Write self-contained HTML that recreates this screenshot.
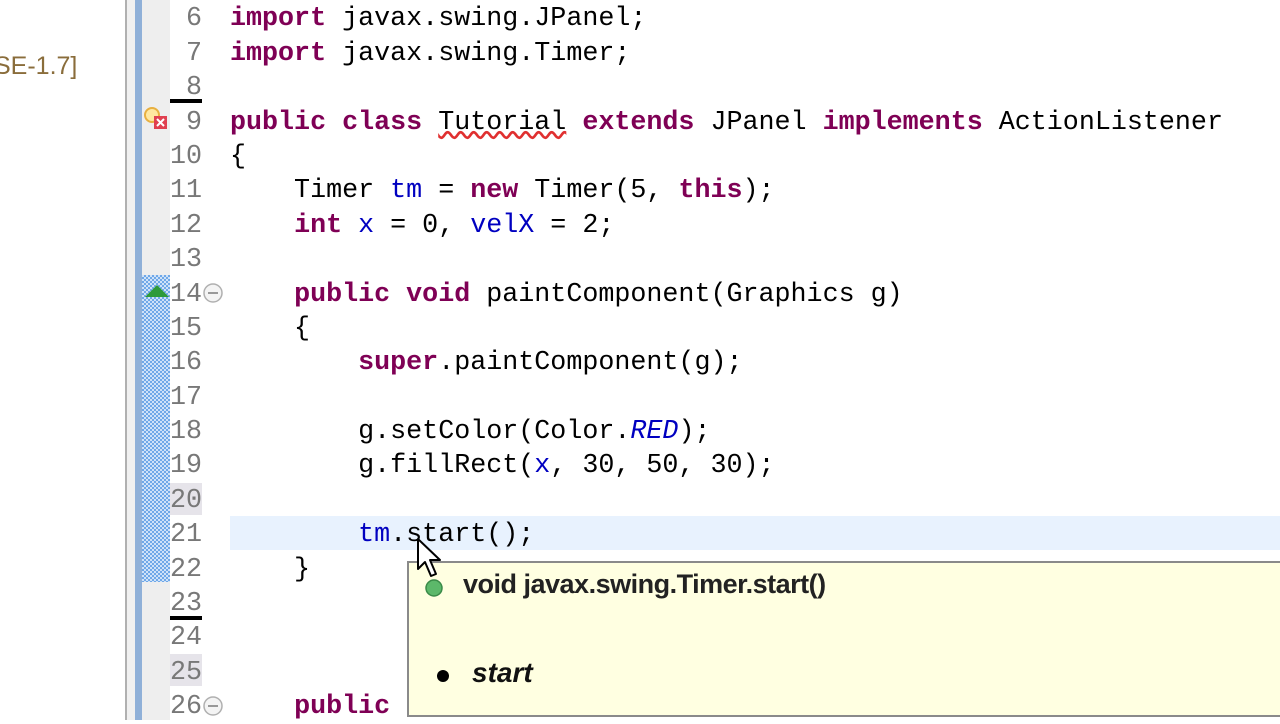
<!DOCTYPE html>
<html><head><meta charset="utf-8"><style>
body{margin:0;width:1280px;height:720px;overflow:hidden;background:#fff;position:relative;font-family:"Liberation Mono",monospace}
.a{position:absolute}
.ln{position:absolute;left:150px;width:52px;text-align:right;font-size:26.7px;color:#787878;line-height:34px;height:34px;margin-top:2px}
.cl{position:absolute;left:230px;font-size:26.7px;line-height:34px;height:34px;white-space:pre;color:#000;margin-top:2px}
.k{color:#7f0055;font-weight:bold}
.f{color:#0000c0}
.i{color:#0000c0;font-style:italic}
</style></head><body>
<div class="a" style="left:0;top:0;width:125px;height:720px;background:#fff"></div>
<div class="a" style="top:52px;font-family:'Liberation Sans',sans-serif;font-size:25px;color:#8a6d3b;left:-6px">SE-1.7]</div>
<div class="a" style="left:125px;top:0;width:2px;height:720px;background:#b0b0b0"></div>
<div class="a" style="left:127px;top:0;width:8px;height:720px;background:#f0f0f0"></div>
<div class="a" style="left:135px;top:0;width:7px;height:720px;background:#8fb0d8"></div>
<div class="a" style="left:142px;top:0;width:28px;height:720px;background:#eeeeee"></div>
<div class="a" style="left:142px;top:275px;width:28px;height:307px;background:repeating-conic-gradient(#6fa8e8 0 25%,#cfe2f8 0 50%) 0 0/4px 4px"></div>
<div class="a" style="left:170px;top:0;width:54px;height:720px;background:#fff"></div>
<div class="a" style="left:230px;top:516px;width:1050px;height:34px;background:#e8f2fe"></div>
<div class="a" style="left:170px;top:483px;width:32px;height:32px;background:#e6e4ea"></div>
<div class="a" style="left:170px;top:654px;width:32px;height:32px;background:#e6e4ea"></div>
<div class="a" style="left:170px;top:99px;width:32px;height:4px;background:#000"></div>
<div class="a" style="left:170px;top:616px;width:32px;height:4px;background:#000"></div>
<svg class="a" style="left:142px;top:106px" width="30" height="30"><circle cx="10" cy="9" r="7" fill="#ffe8a0" stroke="#e8b040" stroke-width="2"/><rect x="12" y="10" width="13" height="13" fill="#e04050"/><path d="M15 13l7 7M22 13l-7 7" stroke="#fff" stroke-width="2"/></svg>
<svg class="a" style="left:143px;top:280px" width="28" height="20"><path d="M2 17L14 5L26 17Z" fill="#2e9a3a"/></svg>
<svg class="a" style="left:202px;top:282px" width="22" height="22"><circle cx="11" cy="11" r="9" fill="#f4f4f4" stroke="#b0b0b0" stroke-width="1.5"/><path d="M6 11h10" stroke="#999" stroke-width="2"/></svg>
<svg class="a" style="left:202px;top:695px" width="22" height="22"><circle cx="11" cy="11" r="9" fill="#f4f4f4" stroke="#b0b0b0" stroke-width="1.5"/><path d="M6 11h10" stroke="#999" stroke-width="2"/></svg>

<div class="ln" style="top:0px">6</div><div class="ln" style="top:35px">7</div><div class="ln" style="top:69px">8</div><div class="ln" style="top:104px">9</div><div class="ln" style="top:138px">10</div><div class="ln" style="top:172px">11</div><div class="ln" style="top:207px">12</div><div class="ln" style="top:241px">13</div><div class="ln" style="top:276px">14</div><div class="ln" style="top:310px">15</div><div class="ln" style="top:344px">16</div><div class="ln" style="top:379px">17</div><div class="ln" style="top:413px">18</div><div class="ln" style="top:447px">19</div><div class="ln" style="top:482px">20</div><div class="ln" style="top:516px">21</div><div class="ln" style="top:551px">22</div><div class="ln" style="top:585px">23</div><div class="ln" style="top:619px">24</div><div class="ln" style="top:654px">25</div><div class="ln" style="top:688px">26</div>

<div class="cl" style="top:0px"><span class="k">import</span> javax.swing.JPanel;</div>
<div class="cl" style="top:35px"><span class="k">import</span> javax.swing.Timer;</div>
<div class="cl" style="top:104px"><span class="k">public</span> <span class="k">class</span> <span style="text-decoration:underline wavy #e03030">Tutorial</span> <span class="k">extends</span> JPanel <span class="k">implements</span> ActionListener</div>
<div class="cl" style="top:138px">{</div>
<div class="cl" style="top:172px">    Timer <span class="f">tm</span> = <span class="k">new</span> Timer(5, <span class="k">this</span>);</div>
<div class="cl" style="top:207px">    <span class="k">int</span> <span class="f">x</span> = 0, <span class="f">velX</span> = 2;</div>
<div class="cl" style="top:276px">    <span class="k">public</span> <span class="k">void</span> paintComponent(Graphics g)</div>
<div class="cl" style="top:310px">    {</div>
<div class="cl" style="top:344px">        <span class="k">super</span>.paintComponent(g);</div>
<div class="cl" style="top:413px">        g.setColor(Color.<span class="i">RED</span>);</div>
<div class="cl" style="top:447px">        g.fillRect(<span class="f">x</span>, 30, 50, 30);</div>
<div class="cl" style="top:516px">        <span class="f">tm</span>.start();</div>
<div class="cl" style="top:551px">    }</div>
<div class="cl" style="top:688px">    <span class="k">public</span></div>

<div class="a" style="left:407px;top:561px;width:873px;height:156px;background:#ffffe1;border-top:2px solid #8a8a8a;border-left:2px solid #8a8a8a;border-bottom:2px solid #8a8a8a;box-sizing:border-box"></div>
<svg class="a" style="left:423px;top:577px" width="22" height="22"><circle cx="11" cy="11" r="8" fill="#5cb86a" stroke="#3a8a48" stroke-width="1.5"/></svg>
<div class="a" style="left:463px;top:569px;font-family:'Liberation Sans',sans-serif;font-weight:bold;font-size:27px;color:#222;letter-spacing:-0.5px">void javax.swing.Timer.start()</div>
<div class="a" style="left:437px;top:670px;width:12px;height:12px;border-radius:50%;background:#000"></div>
<div class="a" style="left:472px;top:657px;font-family:'Liberation Sans',sans-serif;font-weight:bold;font-style:italic;font-size:28px;color:#111">start</div>
<svg class="a" style="left:415px;top:537px" width="34" height="46"><path d="M3 2L3 32L10 25L16 39L21 37L15 23L25 23Z" fill="#fff" stroke="#000" stroke-width="2" stroke-linejoin="round"/></svg>
</body></html>
